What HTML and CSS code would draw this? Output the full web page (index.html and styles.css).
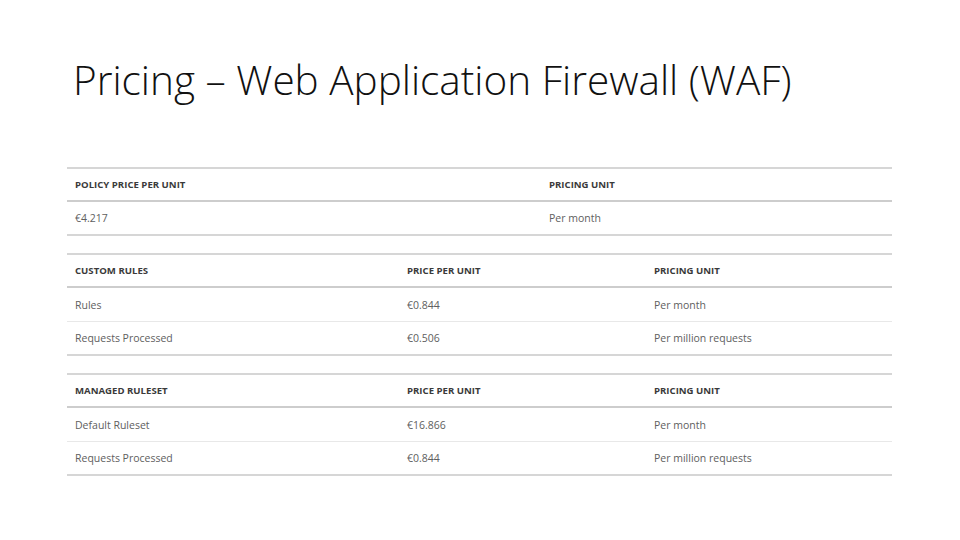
FILE: index.html
```html
<!DOCTYPE html>
<html>
<head>
<meta charset="utf-8">
<link rel="stylesheet" href="styles.css">
</head>
<body>
<div class="slide">
  <h1 class="title">Pricing – Web Application Firewall (WAF)</h1>
  <div class="tables">
    <table class="price t2">
      <thead><tr><th class="c1">POLICY PRICE PER UNIT</th><th>PRICING UNIT</th></tr></thead>
      <tbody><tr><td>€4.217</td><td>Per month</td></tr></tbody>
    </table>
    <table class="price t3">
      <thead><tr><th class="c1">CUSTOM RULES</th><th class="c2">PRICE PER UNIT</th><th>PRICING UNIT</th></tr></thead>
      <tbody>
        <tr><td>Rules</td><td>€0.844</td><td>Per month</td></tr>
        <tr><td>Requests Processed</td><td>€0.506</td><td>Per million requests</td></tr>
      </tbody>
    </table>
    <table class="price t3">
      <thead><tr><th class="c1">MANAGED RULESET</th><th class="c2">PRICE PER UNIT</th><th>PRICING UNIT</th></tr></thead>
      <tbody>
        <tr><td>Default Ruleset</td><td>€16.866</td><td>Per month</td></tr>
        <tr><td>Requests Processed</td><td>€0.844</td><td>Per million requests</td></tr>
      </tbody>
    </table>
  </div>
</div>
</body>
</html>
```
FILE: styles.css
```css
html, body {
  margin: 0;
  padding: 0;
  background: #ffffff;
}
.slide {
  width: 960px;
  height: 540px;
  overflow: hidden;
  padding-top: 52px;
  box-sizing: border-box;
}
.title {
  margin: 0 0 0 73px;
  font-family: "Open Sans", sans-serif;
  font-weight: 300;
  font-size: 40.5px;
  line-height: 56px;
  color: #111;
}
.tables {
  margin: 59px 0 0 67px;
  width: 825px;
  display: flex;
  flex-direction: column;
  gap: 17px;
}
.price {
  width: 825px;
  border-collapse: collapse;
  table-layout: fixed;
  font-family: "Open Sans", sans-serif;
  border-top: 2px solid #d6d6d6;
}
.price th {
  text-align: left;
  font-size: 9.6px;
  font-weight: 700;
  color: #3a3a3a;
  height: 31px;
  padding: 0 8px;
  border-bottom: 2px solid #cdcdcd;
}
.price td {
  font-size: 10.5px;
  font-weight: 400;
  color: #606060;
  height: 33px;
  padding: 0 8px;
  border-bottom: 1px solid #e8e8e8;
}
.price tbody tr:last-child td {
  height: 32px;
  border-bottom: 2px solid #d6d6d6;
}
.t2 .c1 { width: 458px; }
.t3 .c1 { width: 316px; }
.t3 .c2 { width: 231px; }
```
